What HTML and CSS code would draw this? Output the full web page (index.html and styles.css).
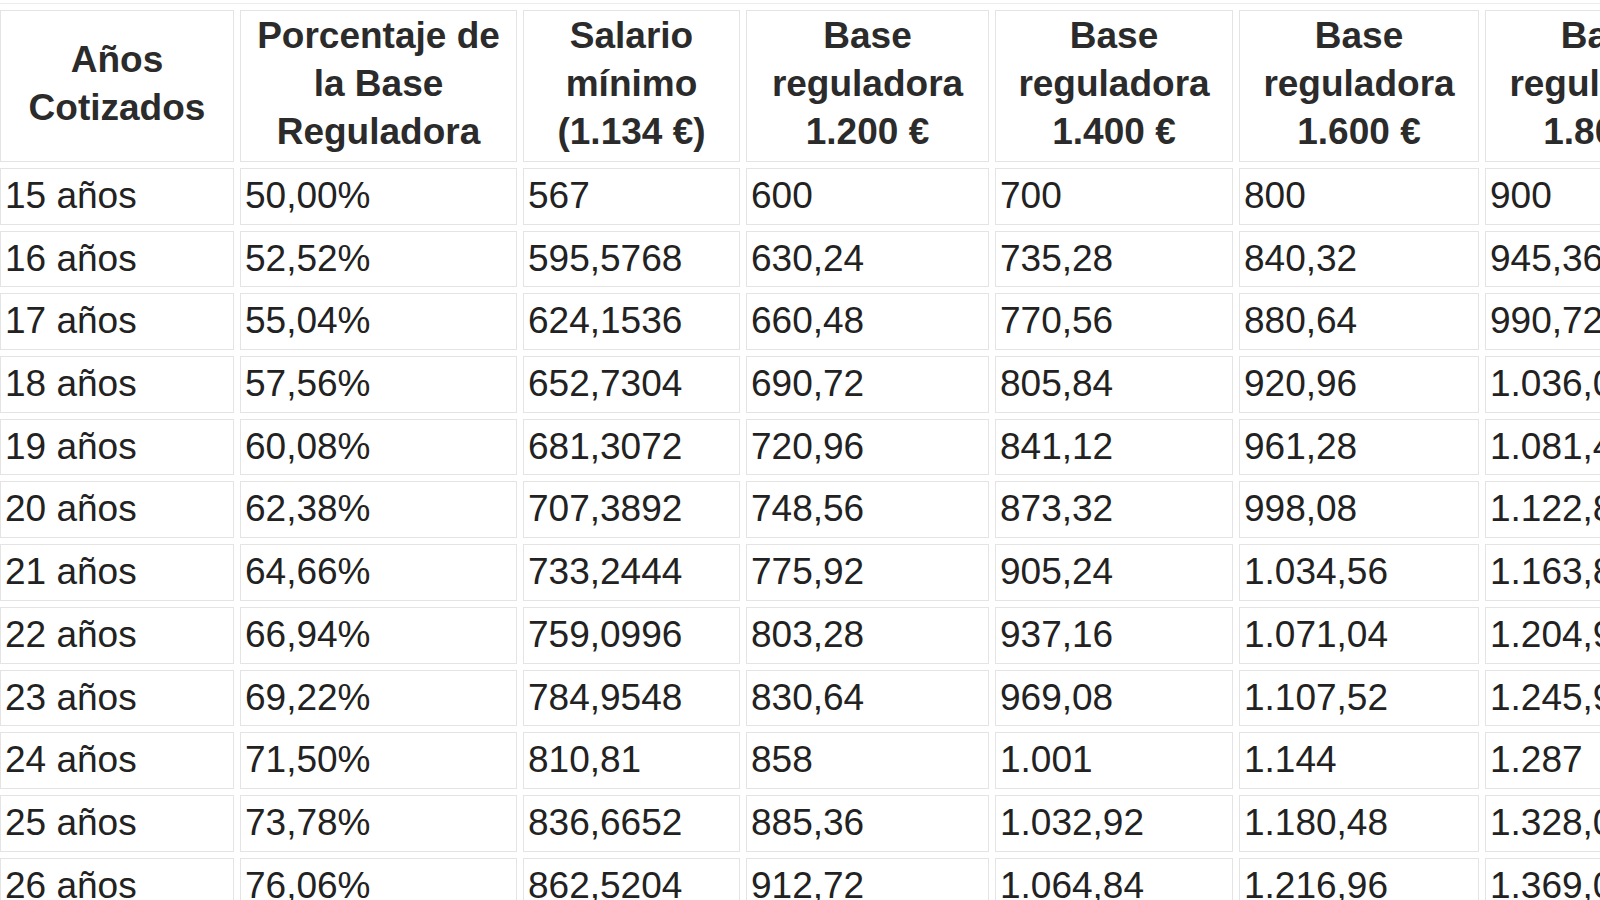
FILE: index.html
```html
<!DOCTYPE html>
<html lang="es">
<head>
<meta charset="utf-8">
<title>Pensión por años cotizados</title>
<link rel="stylesheet" href="styles.css">
</head>
<body>
<table class="pension">
  <thead>
    <tr>
      <th class="c1">Años<br>Cotizados</th>
      <th class="c2">Porcentaje de<br>la Base<br>Reguladora</th>
      <th class="c3">Salario<br>mínimo<br>(1.134 €)</th>
      <th class="c4">Base<br>reguladora<br>1.200 €</th>
      <th class="c5">Base<br>reguladora<br>1.400 €</th>
      <th class="c6">Base<br>reguladora<br>1.600 €</th>
      <th class="c7">Base<br>reguladora<br>1.800 €</th>
    </tr>
  </thead>
  <tbody>
    <tr><td>15 años</td><td>50,00%</td><td>567</td><td>600</td><td>700</td><td>800</td><td>900</td></tr>
    <tr><td>16 años</td><td>52,52%</td><td>595,5768</td><td>630,24</td><td>735,28</td><td>840,32</td><td>945,36</td></tr>
    <tr><td>17 años</td><td>55,04%</td><td>624,1536</td><td>660,48</td><td>770,56</td><td>880,64</td><td>990,72</td></tr>
    <tr><td>18 años</td><td>57,56%</td><td>652,7304</td><td>690,72</td><td>805,84</td><td>920,96</td><td>1.036,08</td></tr>
    <tr><td>19 años</td><td>60,08%</td><td>681,3072</td><td>720,96</td><td>841,12</td><td>961,28</td><td>1.081,44</td></tr>
    <tr><td>20 años</td><td>62,38%</td><td>707,3892</td><td>748,56</td><td>873,32</td><td>998,08</td><td>1.122,84</td></tr>
    <tr><td>21 años</td><td>64,66%</td><td>733,2444</td><td>775,92</td><td>905,24</td><td>1.034,56</td><td>1.163,88</td></tr>
    <tr><td>22 años</td><td>66,94%</td><td>759,0996</td><td>803,28</td><td>937,16</td><td>1.071,04</td><td>1.204,92</td></tr>
    <tr><td>23 años</td><td>69,22%</td><td>784,9548</td><td>830,64</td><td>969,08</td><td>1.107,52</td><td>1.245,96</td></tr>
    <tr><td>24 años</td><td>71,50%</td><td>810,81</td><td>858</td><td>1.001</td><td>1.144</td><td>1.287</td></tr>
    <tr><td>25 años</td><td>73,78%</td><td>836,6652</td><td>885,36</td><td>1.032,92</td><td>1.180,48</td><td>1.328,04</td></tr>
    <tr><td>26 años</td><td>76,06%</td><td>862,5204</td><td>912,72</td><td>1.064,84</td><td>1.216,96</td><td>1.369,08</td></tr>
  </tbody>
</table>
</body>
</html>
```

FILE: styles.css
```css
html, body {
  margin: 0;
  padding: 0;
  background: #ffffff;
  overflow: hidden;
  height: 900px;
}

.pension {
  table-layout: fixed;
  width: 1737px;
  border-collapse: separate;
  border-spacing: 6px;
  border-top: 1px solid #ececec;
  margin: 3px 0 0 -6px;
  font-family: "Liberation Sans", Arial, Helvetica, sans-serif;
}

.pension th,
.pension td {
  box-sizing: border-box;
  border: 1px solid #e4e4e4;
  background: #ffffff;
}

.pension th {
  height: 152px;
  padding: 1px 2px 5px 2px;
  font-size: 37px;
  line-height: 48px;
  font-weight: bold;
  color: #2b2b2b;
  text-align: center;
  vertical-align: middle;
  white-space: nowrap;
}

.pension td {
  height: 56.7px;
  padding: 7px 4px 7.7px 4px;
  font-size: 37px;
  line-height: 40px;
  color: #222222;
  text-align: left;
  vertical-align: middle;
  white-space: nowrap;
}

.c1 { width: 234px; }
.c2 { width: 277px; }
.c3 { width: 217px; }
.c4 { width: 243px; }
.c5 { width: 238px; }
.c6 { width: 240px; }
.c7 { width: 240px; }
```
